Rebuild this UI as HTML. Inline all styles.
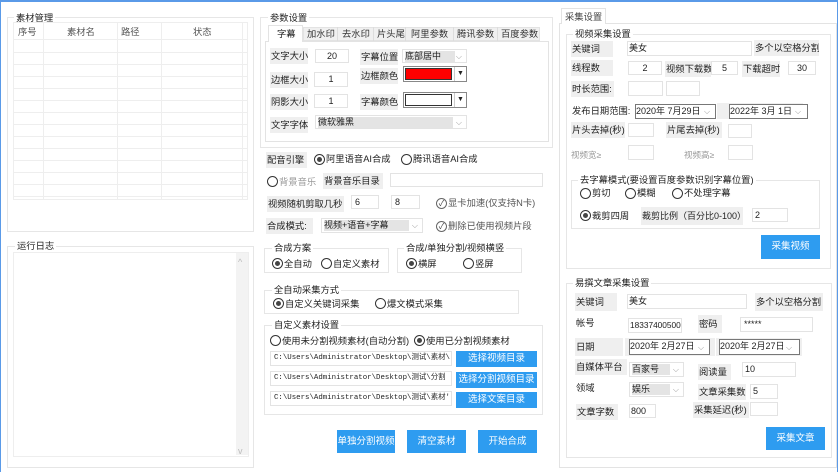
<!DOCTYPE html>
<html><head><meta charset="utf-8"><style>
*{box-sizing:border-box;margin:0;padding:0}
body{width:838px;height:472px;background:#fff;position:relative;overflow:hidden;font-family:"Liberation Sans","Noto Sans CJK SC",sans-serif;font-size:9.3px;color:#222}
div,span{position:absolute}
.frame{left:0;top:0;width:838px;height:472px;border-top:2px solid #5a9ae8;border-left:1px solid #5a9ae8;border-right:1px solid #5a9ae8}
.g{border:1px solid #e6e6e6}
.gt{background:#fff;padding:0 2px;line-height:12px;white-space:nowrap}
.l{background:#efefef;line-height:16px;white-space:nowrap;padding-left:1px;overflow:hidden}
.t{white-space:nowrap;line-height:14px}
.i{border:1px solid #e3e3e3;background:#fff;line-height:13px;white-space:nowrap;overflow:hidden;font-size:9px}
.c{text-align:center}
.sel{border:1px solid #e3e3e3;background:#fff;line-height:13px;white-space:nowrap;font-size:9px}
.sel .in{left:2px;top:1px;background:#e4e4e4;height:11px;line-height:11px}
.sel .ar{right:4px;top:0;color:#999;font-size:8px}
.b{background:#2e9cf0;color:#fff;text-align:center;white-space:nowrap;font-size:9.5px}
.r{width:11px;height:11px;border:1px solid #333;border-radius:50%;background:#fff}
.r.on::after{content:"";position:absolute;left:2px;top:2px;width:5px;height:5px;border-radius:50%;background:#444}
.mono{font-family:"Liberation Mono","Noto Sans CJK SC",monospace;font-size:7.4px;padding-left:3px}
.cb{width:11px;height:11px;border:1px solid #666;border-radius:50%;font-size:8px;line-height:9px;text-align:center;color:#444}
.gray{color:#999}
</style></head><body>
<div class="frame"></div>

<div class="g" style="left:7px;top:17px;width:247px;height:215px"></div>
<div class="gt" style="left:14px;top:12px">素材管理</div>
<div style="left:13px;top:22px;width:235px;height:178px;border:1px solid #eee;
background:repeating-linear-gradient(#fff 0 11px,#eee 11px 12px);background-position:0 18px">
</div>
<div style="left:14px;top:23px;width:233px;height:17px;background:#fff;border-bottom:1px solid #eee"></div>
<div style="left:43px;top:23px;width:1px;height:176px;background:#eee"></div>
<div style="left:117px;top:23px;width:1px;height:176px;background:#eee"></div>
<div style="left:161px;top:23px;width:1px;height:176px;background:#eee"></div>
<div style="left:242px;top:23px;width:1px;height:176px;background:#eee"></div>
<div class="t" style="left:18px;top:25px;color:#555">序号</div>
<div class="t" style="left:67px;top:25px;color:#555">素材名</div>
<div class="t" style="left:121px;top:25px;color:#555">路径</div>
<div class="t" style="left:193px;top:25px;color:#555">状态</div>

<div class="g" style="left:7px;top:246px;width:247px;height:222px"></div>
<div class="gt" style="left:15px;top:240px">运行日志</div>
<div style="left:13px;top:252px;width:236px;height:205px;border:1px solid #eee"></div>
<div style="left:236px;top:253px;width:12px;height:202px;background:#f3f3f3"></div>
<div class="t" style="left:238px;top:255px;color:#bbb;font-size:9px">^</div>
<div class="t" style="left:238px;top:444px;color:#bbb;font-size:9px">v</div>

<div class="g" style="left:260px;top:17px;width:293px;height:131px"></div>
<div class="gt" style="left:268px;top:12px">参数设置</div>
<div style="left:265px;top:41px;width:284px;height:101px;border:1px solid #e3e3e3"></div>
<div style="left:268px;top:25px;width:35px;height:17px;background:#fff;border:1px solid #e3e3e3;border-bottom:none"></div>
<div class="t" style="left:277px;top:27px">字幕</div>
<div style="left:303px;top:27px;width:237px;height:14px;background:#f0f0f0;border:1px solid #e3e3e3"></div>
<div style="left:337px;top:27px;width:1px;height:14px;background:#ddd"></div>
<div style="left:373px;top:27px;width:1px;height:14px;background:#ddd"></div>
<div style="left:405px;top:27px;width:1px;height:14px;background:#ddd"></div>
<div style="left:453px;top:27px;width:1px;height:14px;background:#ddd"></div>
<div style="left:497px;top:27px;width:1px;height:14px;background:#ddd"></div>
<div class="t" style="left:307px;top:27px;color:#333">加水印</div>
<div class="t" style="left:342px;top:27px;color:#333">去水印</div>
<div class="t" style="left:377px;top:27px;color:#333">片头尾</div>
<div class="t" style="left:411px;top:27px;color:#333">阿里参数</div>
<div class="t" style="left:457px;top:27px;color:#333">腾讯参数</div>
<div class="t" style="left:501px;top:27px;color:#333">百度参数</div>

<div class="l" style="left:270px;top:48px;width:38px">文字大小</div>
<div class="i c" style="left:315px;top:49px;width:34px;height:14px">20</div>
<div class="l" style="left:360px;top:49px;width:38px">字幕位置</div>
<div class="sel" style="left:402px;top:49px;width:65px;height:14px"><span class="in" style="width:50px">底部居中</span><span class="ar">⌵</span></div>
<div class="l" style="left:270px;top:72px;width:38px">边框大小</div>
<div class="i c" style="left:314px;top:72px;width:34px;height:15px">1</div>
<div class="l" style="left:360px;top:68px;width:38px">边框颜色</div>
<div style="left:403px;top:66px;width:64px;height:16px;border:1px solid #888;background:#fff"><span style="left:1px;top:1px;width:47px;height:12px;background:#f00;border:1px solid #333"></span><span style="left:50px;top:0;width:12px;height:14px;border-left:1px solid #ccc;font-size:7px;text-align:center;line-height:14px">▼</span></div>
<div class="l" style="left:270px;top:94px;width:38px">阴影大小</div>
<div class="i c" style="left:314px;top:94px;width:34px;height:14px">1</div>
<div class="l" style="left:360px;top:94px;width:38px">字幕颜色</div>
<div style="left:403px;top:92px;width:64px;height:16px;border:1px solid #888;background:#fff"><span style="left:1px;top:1px;width:47px;height:12px;background:#fff;border:1px solid #333"></span><span style="left:50px;top:0;width:12px;height:14px;border-left:1px solid #ccc;font-size:7px;text-align:center;line-height:14px">▼</span></div>
<div class="l" style="left:270px;top:117px;width:38px">文字字体</div>
<div class="sel" style="left:315px;top:115px;width:152px;height:14px"><span class="in" style="width:135px">微软雅黑</span><span class="ar">⌵</span></div>

<div class="l" style="left:266px;top:152px;width:41px">配音引擎</div>
<div class="r on" style="left:314px;top:154px"></div><div class="t" style="left:326px;top:152px">阿里语音AI合成</div>
<div class="r" style="left:401px;top:154px"></div><div class="t" style="left:413px;top:152px">腾讯语音AI合成</div>
<div class="r" style="left:267px;top:176px"></div><div class="t gray" style="left:279px;top:175px">背景音乐</div>
<div class="l" style="left:323px;top:173px;width:60px">背景音乐目录</div>
<div class="i" style="left:390px;top:173px;width:153px;height:14px"></div>
<div class="l" style="left:267px;top:196px;width:77px">视频随机剪取几秒</div>
<div class="i" style="left:351px;top:195px;width:28px;height:14px;padding-left:3px">6</div>
<div class="i" style="left:391px;top:195px;width:29px;height:14px;padding-left:3px">8</div>
<div class="cb" style="left:436px;top:198px">✓</div><div class="t" style="left:448px;top:196px;color:#555">显卡加速(仅支持N卡)</div>
<div class="l" style="left:266px;top:218px;width:47px">合成模式:</div>
<div class="sel" style="left:321px;top:218px;width:102px;height:15px"><span class="in" style="width:85px">视频+语音+字幕</span><span class="ar">⌵</span></div>
<div class="cb" style="left:436px;top:221px">✓</div><div class="t" style="left:448px;top:219px;color:#555">删除已使用视频片段</div>

<div class="g" style="left:264px;top:248px;width:125px;height:25px"></div>
<div class="gt" style="left:272px;top:242px">合成方案</div>
<div class="r on" style="left:272px;top:258px"></div><div class="t" style="left:284px;top:257px">全自动</div>
<div class="r" style="left:321px;top:258px"></div><div class="t" style="left:333px;top:257px">自定义素材</div>
<div class="g" style="left:397px;top:248px;width:125px;height:25px"></div>
<div class="gt" style="left:404px;top:242px">合成/单独分割/视频横竖</div>
<div class="r on" style="left:406px;top:258px"></div><div class="t" style="left:418px;top:257px">横屏</div>
<div class="r" style="left:463px;top:258px"></div><div class="t" style="left:475px;top:257px">竖屏</div>

<div class="g" style="left:264px;top:290px;width:255px;height:24px"></div>
<div class="gt" style="left:272px;top:284px">全自动采集方式</div>
<div class="r on" style="left:273px;top:298px"></div><div class="t" style="left:285px;top:297px">自定义关键词采集</div>
<div class="r" style="left:375px;top:298px"></div><div class="t" style="left:387px;top:297px">爆文模式采集</div>

<div class="g" style="left:264px;top:325px;width:279px;height:90px"></div>
<div class="gt" style="left:272px;top:319px">自定义素材设置</div>
<div class="r" style="left:270px;top:335px"></div><div class="t" style="left:282px;top:334px">使用未分割视频素材(自动分割)</div>
<div class="r on" style="left:414px;top:335px"></div><div class="t" style="left:426px;top:334px">使用已分割视频素材</div>
<div class="i mono" style="left:270px;top:351px;width:182px;height:15px">C:\Users\Administrator\Desktop\测试\素材\</div>
<div class="i mono" style="left:270px;top:371px;width:182px;height:15px">C:\Users\Administrator\Desktop\测试\分割</div>
<div class="i mono" style="left:270px;top:391px;width:182px;height:15px">C:\Users\Administrator\Desktop\测试\素材'</div>
<div class="b" style="left:456px;top:351px;width:81px;height:16px;line-height:16px">选择视频目录</div>
<div class="b" style="left:456px;top:372px;width:81px;height:16px;line-height:16px">选择分割视频目录</div>
<div class="b" style="left:456px;top:392px;width:81px;height:16px;line-height:16px">选择文案目录</div>

<div class="b" style="left:337px;top:430px;width:58px;height:23px;line-height:23px">单独分割视频</div>
<div class="b" style="left:407px;top:430px;width:59px;height:23px;line-height:23px">清空素材</div>
<div class="b" style="left:478px;top:430px;width:59px;height:23px;line-height:23px">开始合成</div>

<div style="left:559px;top:23px;width:278px;height:445px;border:1px solid #e3e3e3"></div>
<div style="left:561px;top:8px;width:45px;height:16px;border:1px solid #e3e3e3;border-bottom:none;background:#fff"></div>
<div class="t" style="left:565px;top:10px;color:#444">采集设置</div>

<div class="g" style="left:566px;top:34px;width:265px;height:235px"></div>
<div class="gt" style="left:573px;top:28px">视频采集设置</div>
<div class="l" style="left:571px;top:41px;width:42px">关键词</div>
<div class="i" style="left:627px;top:41px;width:125px;height:15px;padding-left:1px">美女</div>
<div class="l" style="left:754px;top:40px;width:65px">多个以空格分割</div>
<div class="l" style="left:571px;top:60px;width:42px">线程数</div>
<div class="i c" style="left:628px;top:61px;width:34px;height:14px">2</div>
<div class="l" style="left:665px;top:61px;width:46px">视频下载数</div>
<div class="i c" style="left:711px;top:61px;width:27px;height:14px">5</div>
<div class="l" style="left:742px;top:61px;width:38px">下载超时</div>
<div class="i c" style="left:788px;top:61px;width:28px;height:14px">30</div>
<div class="l" style="left:571px;top:81px;width:43px">时长范围:</div>
<div class="i" style="left:628px;top:81px;width:35px;height:15px"></div>
<div class="i" style="left:666px;top:81px;width:34px;height:15px"></div>
<div class="l" style="left:571px;top:103px;width:92px"></div><div class="t" style="left:572px;top:104px">发布日期范围:</div>
<div class="i" style="left:635px;top:104px;width:81px;height:15px;border-color:#777">2020年 7月29日 <span style="left:68px;top:0;color:#999;font-size:8px">⌵</span></div>
<div style="left:717px;top:103px;width:86px;height:16px;background:#efefef"></div>
<div class="i" style="left:729px;top:104px;width:79px;height:15px;border-color:#777">2022年 3月 1日 <span style="left:65px;top:0;color:#999;font-size:8px">⌵</span></div>
<div class="l" style="left:571px;top:122px;width:54px">片头去掉(秒)</div>
<div class="i" style="left:628px;top:123px;width:26px;height:14px"></div>
<div class="l" style="left:666px;top:122px;width:56px">片尾去掉(秒)</div>
<div class="i" style="left:728px;top:124px;width:24px;height:14px"></div>
<div class="t gray" style="left:571px;top:148px;font-size:8.5px">视频宽≥</div>
<div class="i" style="left:628px;top:145px;width:26px;height:15px"></div>
<div class="t gray" style="left:684px;top:148px;font-size:8.5px">视频高≥</div>
<div class="i" style="left:728px;top:145px;width:25px;height:15px"></div>

<div class="g" style="left:571px;top:180px;width:249px;height:49px"></div>
<div class="gt" style="left:578px;top:174px">去字幕模式(要设置百度参数识别字幕位置)</div>
<div class="r" style="left:580px;top:188px"></div><div class="t" style="left:592px;top:186px">剪切</div>
<div class="r" style="left:625px;top:188px"></div><div class="t" style="left:637px;top:186px">模糊</div>
<div class="r" style="left:672px;top:188px"></div><div class="t" style="left:684px;top:186px">不处理字幕</div>
<div class="r on" style="left:580px;top:210px"></div><div class="t" style="left:592px;top:209px">裁剪四周</div>
<div class="l" style="left:641px;top:207px;width:102px;height:18px;line-height:18px;font-size:9px"> 裁剪比例（百分比0-100）</div>
<div class="i" style="left:752px;top:208px;width:36px;height:14px;padding-left:2px">2</div>
<div class="b" style="left:761px;top:235px;width:59px;height:24px;line-height:24px">采集视频</div>

<div class="g" style="left:566px;top:283px;width:266px;height:175px"></div>
<div class="gt" style="left:573px;top:277px">易撰文章采集设置</div>
<div class="l" style="left:575px;top:293px;width:42px;height:18px;line-height:18px">关键词</div>
<div class="i" style="left:627px;top:294px;width:120px;height:15px;padding-left:1px">美女</div>
<div class="l" style="left:755px;top:293px;width:68px;height:18px;line-height:18px">多个以空格分割</div>
<div class="t" style="left:576px;top:316px">帐号</div>
<div class="i" style="left:628px;top:318px;width:54px;height:15px;font-size:8.3px;padding-left:1px">18337400500</div>
<div class="l" style="left:698px;top:315px;width:24px;height:18px;line-height:18px">密码</div>
<div class="i" style="left:740px;top:317px;width:73px;height:15px;padding-left:3px">*****</div>
<div class="l" style="left:575px;top:338px;width:48px;height:18px;line-height:18px">日期</div>
<div style="left:625px;top:338px;width:90px;height:18px;background:#efefef"></div>
<div class="i" style="left:629px;top:339px;width:81px;height:16px;border-color:#777">2020年 2月27日 <span style="left:68px;top:1px;color:#999;font-size:8px">⌵</span></div>
<div style="left:716px;top:338px;width:86px;height:18px;background:#efefef"></div>
<div class="i" style="left:719px;top:339px;width:81px;height:16px;border-color:#777">2020年 2月27日 <span style="left:66px;top:1px;color:#999;font-size:8px">⌵</span></div>
<div class="l" style="left:575px;top:359px;width:52px">自媒体平台</div>
<div class="sel" style="left:629px;top:362px;width:55px;height:15px"><span class="in" style="width:38px">百家号</span><span class="ar">⌵</span></div>
<div class="l" style="left:698px;top:364px;width:33px">阅读量</div>
<div class="i" style="left:742px;top:362px;width:54px;height:15px;padding-left:2px">10</div>
<div class="t" style="left:576px;top:381px">领域</div>
<div class="sel" style="left:629px;top:382px;width:55px;height:15px"><span class="in" style="width:38px">娱乐</span><span class="ar">⌵</span></div>
<div class="l" style="left:698px;top:384px;width:48px">文章采集数</div>
<div class="i" style="left:750px;top:384px;width:28px;height:15px;padding-left:2px">5</div>
<div class="l" style="left:576px;top:404px;width:42px">文章字数</div>
<div class="i" style="left:629px;top:404px;width:27px;height:14px;padding-left:1px">800</div>
<div class="l" style="left:693px;top:402px;width:56px">采集延迟(秒)</div>
<div class="i" style="left:750px;top:402px;width:28px;height:14px"></div>
<div class="b" style="left:766px;top:427px;width:59px;height:23px;line-height:23px">采集文章</div>
</body></html>
